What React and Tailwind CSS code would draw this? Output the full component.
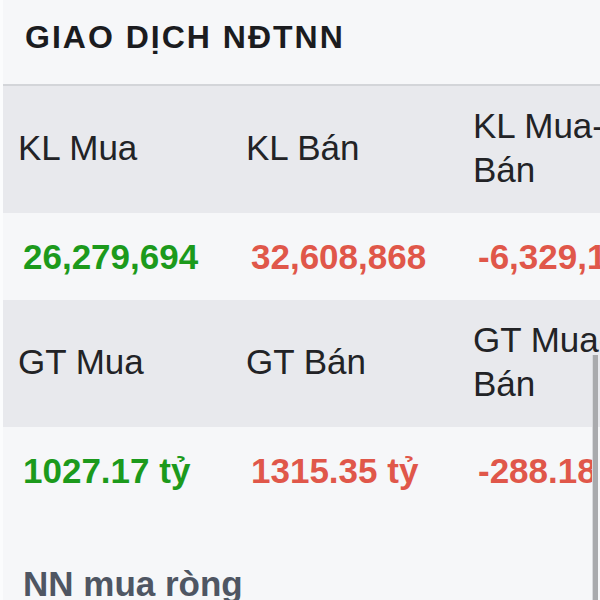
const rows = [
  {
    labels: ['KL Mua', 'KL Bán', 'KL Mua-Bán'],
    values: ['26,279,694', '32,608,868', '-6,329,174'],
  },
  {
    labels: ['GT Mua', 'GT Bán', 'GT Mua-Bán'],
    values: ['1027.17 tỷ', '1315.35 tỷ', '-288.18 tỷ'],
  },
];

const valueColors = ['text-[#1c9a1c]', 'text-[#e0574a]', 'text-[#e0574a]'];

export default function App() {
  return (
    <div
      className="relative w-[600px] h-[600px] overflow-hidden bg-[#f6f7f9] border-l-[3px] border-[#fbfcfd]"
      style={{ fontFamily: '"Liberation Sans", Arial, sans-serif' }}
    >
      {/* Title */}
      <div className="h-[86px] pl-[22px] pt-[17px] border-b-2 border-[#d3d5d9]">
        <h2 className="text-[32px] leading-[40px] font-bold tracking-[2px] text-[#1b1c1f]">
          GIAO DỊCH NĐTNN
        </h2>
      </div>

      {rows.map((row, i) => (
        <div key={i}>
          {/* labels */}
          <div className="grid grid-cols-[228px_227px_160px] h-[127px] bg-[#e8e9ed] text-[35px] leading-[44px] text-[#222326]">
            {row.labels.map((label, j) => (
              <div key={j} className="flex items-center pl-[15px] pb-[3px] whitespace-nowrap">
                {j === 2 ? (
                  <span>
                    {label.split('-')[0]}-
                    <br />
                    {label.split('-')[1]}
                  </span>
                ) : (
                  label
                )}
              </div>
            ))}
          </div>
          {/* values */}
          <div className="grid grid-cols-[228px_227px_160px] h-[87px] items-center text-[35px] leading-[44px] font-bold bg-[#f6f7f9]">
            {row.values.map((v, j) => (
              <div key={j} className={`pl-[20px] whitespace-nowrap ${valueColors[j]}`}>
                {v}
              </div>
            ))}
          </div>
        </div>
      ))}

      <div className="pt-[48px] pl-[20px] text-[35px] leading-[44px] font-bold text-[#4f5663]">
        NN mua ròng
      </div>

      {/* scrollbar thumb */}
      <div className="absolute right-[2px] top-[355px] bottom-0 w-[6px] bg-[#a9aaad] border-l border-[#d9dadd]"></div>
    </div>
  );
}
